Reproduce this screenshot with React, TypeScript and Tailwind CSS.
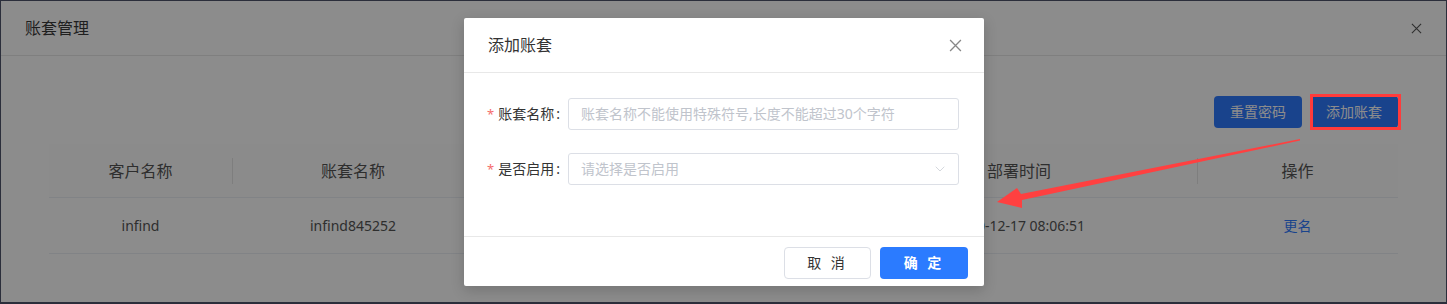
import { ChevronDown } from 'lucide-react'

const font = "font-['Noto_Sans','Noto_Sans_CJK_SC',sans-serif]"

function CloseIcon({ className }: { className?: string }) {
  return (
    <svg viewBox="0 0 12 12" className={className} fill="none" stroke="currentColor" strokeWidth="1.2">
      <path d="M1 1L11 11M11 1L1 11" />
    </svg>
  )
}

const columns = [
  { title: '客户名称', value: 'infind', w: 'w-[183px]' },
  { title: '账套名称', value: 'infind845252', w: 'w-[242px]' },
  { title: '', value: '', w: 'w-[367px]' },
  { title: '部署时间', value: '2020-12-17 08:06:51', w: 'w-[356px]' },
]

function Field({ label, placeholder, select }: { label: string; placeholder: string; select?: boolean }) {
  return (
    <div className="flex items-center">
      <label className="w-[81px] shrink-0 flex items-center text-sm text-[#333]">
        <span className="text-[#f56c6c] mr-[4px] text-[13px]">*</span>
        {label}
        <span className="ml-[2px]">:</span>
      </label>
      <div className="flex-1 h-8 border border-[#dcdfe6] rounded-[3px] flex items-center justify-between pl-3 pr-[10px] text-sm text-[#c0c4cc]">
        <span>{placeholder}</span>
        {select && <ChevronDown className="w-4 h-4 text-[#c0c4cc]" strokeWidth={1} />}
      </div>
    </div>
  )
}

export default function App() {
  return (
    <div className={`relative w-[1447px] h-[304px] overflow-hidden bg-white border-t border-l border-r border-b-2 border-[#2b2e3b] ${font}`}>
      {/* background dialog */}
      <div className="h-[55px] border-b border-[#e8e8e8] px-6 flex items-center justify-between">
        <span className="text-base text-[#3a3a3a]">账套管理</span>
        <CloseIcon className="w-[11px] h-[11px] text-[#555]" />
      </div>
      <div className="px-12 pt-10">
        <div className="flex justify-end gap-2">
          <button className="w-[88px] h-8 rounded-[4px] bg-[#2f7bff] text-white text-sm">重置密码</button>
          <button className="w-[88px] h-8 rounded-[4px] bg-[#2f7bff] text-white text-sm">添加账套</button>
        </div>
        <div className="mt-4 text-[#555]">
          <div className="flex h-[54px] bg-[#fdfdfd] border-b border-[#ebeef5] text-base">
            {columns.map((c, i) => (
              <div key={i} className={`${c.w} flex items-center justify-center relative`}>
                {c.title}
                {i > 0 && <span className="absolute left-0 top-[14px] h-[26px] w-px bg-[#e6e6e6]" />}
              </div>
            ))}
            <div className="flex-1 flex items-center justify-center relative">
              操作
              <span className="absolute left-0 top-[14px] h-[26px] w-px bg-[#e6e6e6]" />
            </div>
          </div>
          <div className="flex h-[56px] border-b border-[#ebeef5] text-sm">
            {columns.map((c, i) => (
              <div key={i} className={`${c.w} flex items-center justify-center`}>
                {c.value}
              </div>
            ))}
            <div className="flex-1 flex items-center justify-center text-[#2f7bff]">更名</div>
          </div>
        </div>
      </div>

      {/* mask */}
      <div className="absolute inset-0 bg-black/45" />

      {/* modal */}
      <div className="absolute left-[463px] top-[17px] w-[520px] h-[268px] bg-white rounded-[2px] shadow-[0_4px_14px_rgba(0,0,0,0.18)] flex flex-col">
        <div className="h-[55px] shrink-0 border-b border-[#e8e8e8] pl-6 pr-[22px] flex items-center justify-between">
          <span className="text-base text-[#333]">添加账套</span>
          <CloseIcon className="w-[13px] h-[13px] text-[#888]" />
        </div>
        <div className="h-[163px] shrink-0 pt-[25px] pl-[23px] pr-[25px] flex flex-col gap-[23px]">
          <Field label="账套名称" placeholder="账套名称不能使用特殊符号,长度不能超过30个字符" />
          <Field label="是否启用" placeholder="请选择是否启用" select />
        </div>
        <div className="flex-1 border-t border-[#e8e8e8] flex justify-end items-start pt-[10px] pr-4 gap-[9px]">
          <button className="w-[87px] h-8 rounded-[4px] border border-[#dcdfe6] bg-white text-sm text-[#333] tracking-[3px]">取 消</button>
          <button className="w-[88px] h-8 rounded-[4px] bg-[#2b7bff] text-sm text-white font-semibold tracking-[3px]">确 定</button>
        </div>
      </div>

      {/* annotation: red box and arrow */}
      <div className="absolute left-[1309px] top-[93px] w-[91px] h-[36px] border-[3px] border-[#ff3b3b]" />
      <svg className="absolute -left-px -top-px w-[1447px] h-[304px] pointer-events-none" viewBox="0 0 1447 304">
        <polygon
          points="997,202 1017,188 1021,194 1300,139 1300,140.5 1022,200 1022,208"
          fill="#ff4040"
        />
      </svg>
    </div>
  )
}
